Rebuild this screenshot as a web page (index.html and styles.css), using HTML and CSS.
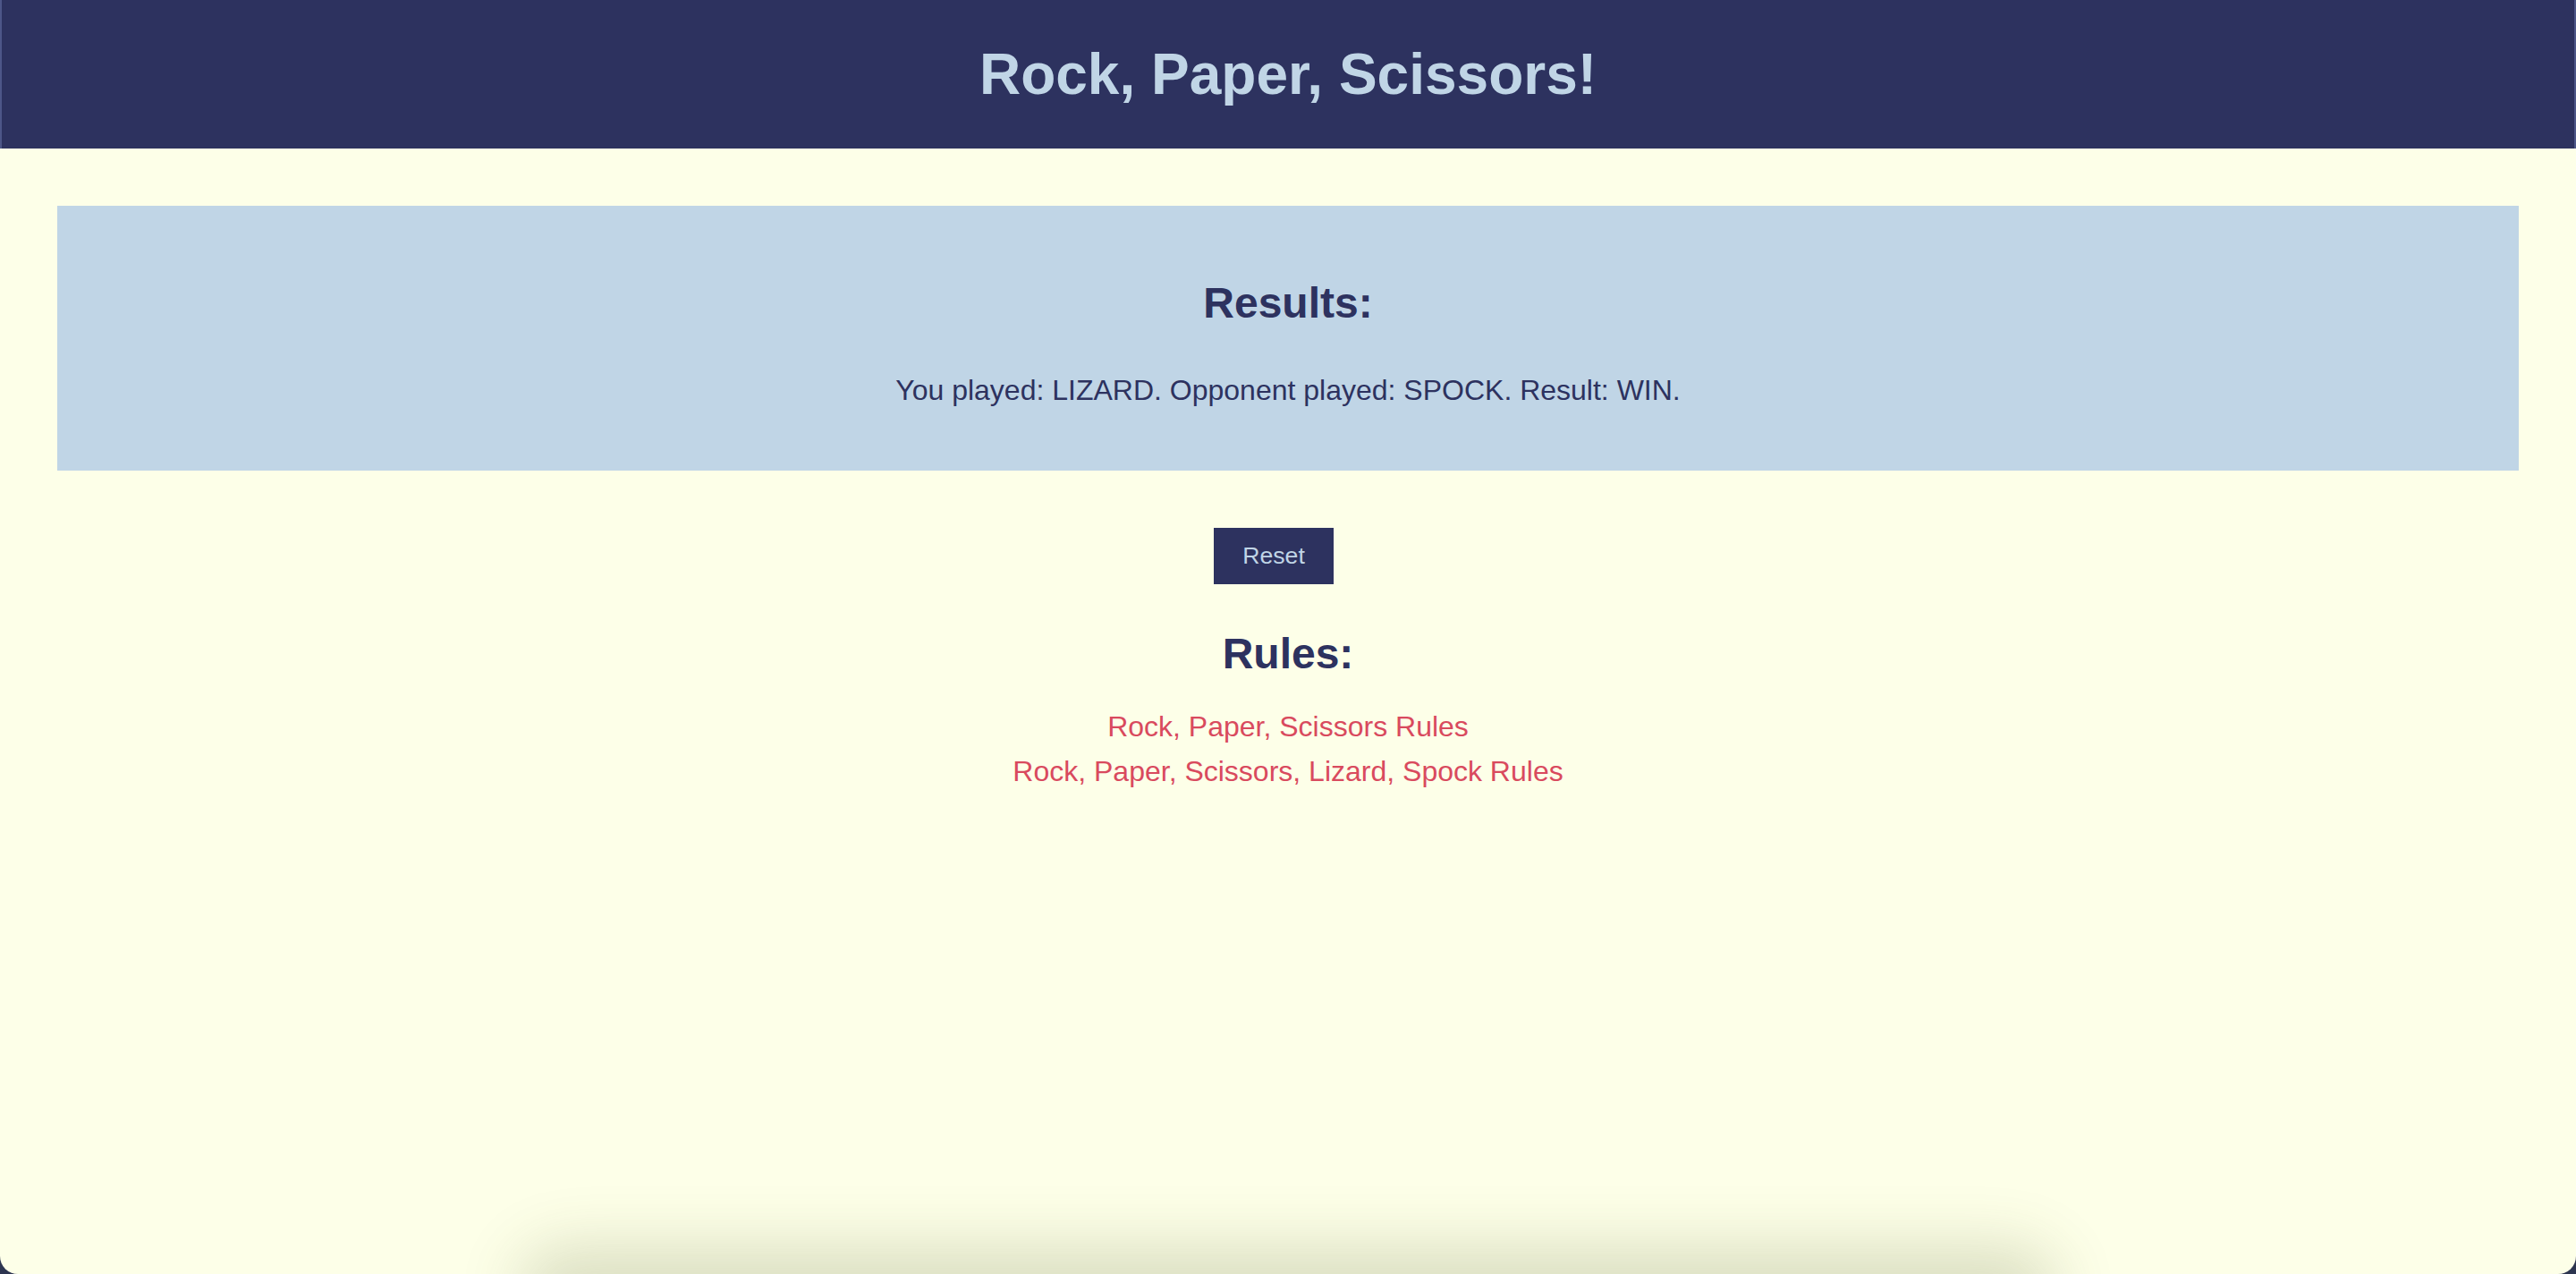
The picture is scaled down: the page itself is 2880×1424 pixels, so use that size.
FILE: index.html
```html
<!DOCTYPE html>
<html lang="en">
<head>
<meta charset="utf-8">
<title>Rock, Paper, Scissors!</title>
<link rel="stylesheet" href="styles.css">
</head>
<body>
<div class="window">
  <header class="topbar">
    <h1 class="title">Rock, Paper, Scissors!</h1>
  </header>
  <main class="content">
    <section class="results">
      <h2 class="heading">Results:</h2>
      <p class="result-text">You played: LIZARD. Opponent played: SPOCK. Result: WIN.</p>
    </section>
    <div class="controls">
      <button class="reset" type="button">Reset</button>
    </div>
    <section class="rules">
      <h2 class="heading rules-heading">Rules:</h2>
      <a class="rule-link" href="#">Rock, Paper, Scissors Rules</a>
      <a class="rule-link" href="#">Rock, Paper, Scissors, Lizard, Spock Rules</a>
    </section>
  </main>
  <div class="dock-shadow"></div>
</div>
</body>
</html>
```
FILE: styles.css
```css
html, body {
  margin: 0;
  padding: 0;
  height: 100%;
}
body {
  background: #2d3550;
  font-family: "Liberation Sans", Arial, sans-serif;
  overflow: hidden;
}
.window {
  position: relative;
  height: 1424px;
  background: #fdffe8;
  border-radius: 0 0 20px 20px;
  overflow: hidden;
}
.topbar {
  background: #2d325f;
  height: 166px;
  display: flex;
  align-items: center;
  justify-content: center;
  border-left: 2px solid #4d5688;
  border-right: 2px solid #4d5688;
  box-sizing: border-box;
}
.title {
  margin: 0;
  font-size: 64px;
  font-weight: bold;
  color: #c0d5e6;
  line-height: 72px;
}
.content {
  padding: 64px 64px 0;
  text-align: center;
}
.results {
  background: #c0d5e6;
  height: 296px;
  box-sizing: border-box;
  padding-top: 82px;
}
.heading {
  margin: 0;
  font-size: 48px;
  font-weight: bold;
  color: #2d325f;
  line-height: 54px;
}
.result-text {
  margin: 52px 0 0;
  font-size: 32px;
  line-height: 37px;
  color: #2d325f;
}
.controls {
  margin-top: 64px;
  display: flex;
  justify-content: center;
}
.reset {
  background: #2d325f;
  color: #c0d5e6;
  border: none;
  font-family: "Liberation Sans", Arial, sans-serif;
  font-size: 26.67px;
  line-height: 31px;
  padding: 16px 32px;
  margin-right: 32px;
  border-radius: 0;
}
.rules {
  margin-top: 51px;
  display: flex;
  flex-direction: column;
  align-items: center;
}
.rule-link {
  display: block;
  font-size: 32px;
  line-height: 50px;
  color: #d94a5e;
  text-decoration: none;
}
.rules-heading {
  margin-bottom: 29px;
}
.dock-shadow {
  position: absolute;
  left: 600px;
  right: 600px;
  bottom: -60px;
  height: 60px;
  border-radius: 40px;
  box-shadow: 0 -10px 70px 20px rgba(80, 90, 40, 0.2);
}
```
